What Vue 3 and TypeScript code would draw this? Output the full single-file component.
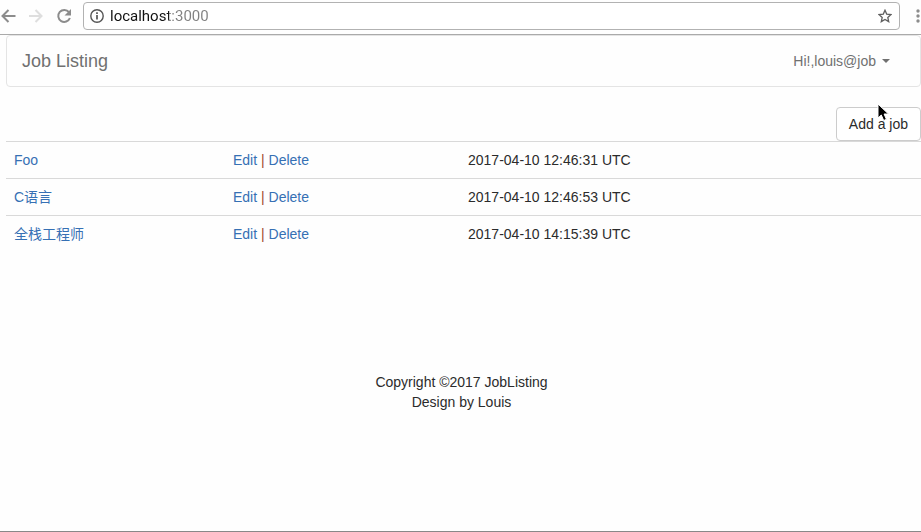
<script setup lang="ts">
import { ref } from 'vue'

interface Job {
  id: number
  title: string
  createdAt: string
}

const address = ref<string>('localhost:3000')

const jobs = ref<Job[]>([
  { id: 1, title: 'Foo', createdAt: '2017-04-10 12:46:31 UTC' },
  { id: 2, title: 'C语言', createdAt: '2017-04-10 12:46:53 UTC' },
  { id: 3, title: '全栈工程师', createdAt: '2017-04-10 14:15:39 UTC' },
])
</script>

<template>
  <div class="window">
    <header class="toolbar">
      <button class="tool" type="button" aria-label="Back">
        <svg width="17" height="16" viewBox="1 0 17 16" fill="none" stroke="#8c8c8c" stroke-width="2">
          <path d="M16.500 8H3.500M9.500 2L3.500 8l6 6" />
        </svg>
      </button>
      <button class="tool" type="button" aria-label="Forward" disabled>
        <svg width="18" height="16" viewBox="0 0 18 16" fill="none" stroke="#dedede" stroke-width="2">
          <path d="M2 8h12.500M8.500 2l6 6-6 6" />
        </svg>
      </button>
      <button class="tool" type="button" aria-label="Reload">
        <svg width="18" height="16" viewBox="0 0 18 16">
          <path d="M14 4.200A6 6 0 1 0 14.900 10" fill="none" stroke="#8c8c8c" stroke-width="2" />
          <path d="M16 1v6.500H9.500z" fill="#8c8c8c" />
        </svg>
      </button>
      <div class="omnibox">
        <svg width="14" height="14" viewBox="0 0 14 14">
          <circle cx="7" cy="7" r="6.200" fill="none" stroke="#555" stroke-width="1.400" />
          <path d="M7 6v4.500M7 3.200v1.700" stroke="#555" stroke-width="1.700" />
        </svg>
        <input v-model="address" class="url" type="text" aria-label="Address" spellcheck="false" />
        <button class="tool star" type="button" aria-label="Bookmark">
          <svg width="14" height="14" viewBox="0 0 14 14">
            <path
              d="M7 1.200l1.700 3.900 4.300.400-3.200 2.900.900 4.200L7 10.400l-3.700 2.200.900-4.200L1 5.500l4.300-.400z"
              fill="none"
              stroke="#606060"
              stroke-width="1.300"
            />
          </svg>
        </button>
      </div>
      <button class="tool menu" type="button" aria-label="Menu">
        <svg width="4" height="14" viewBox="0 0 4 14" fill="#8c8c8c">
          <circle cx="2" cy="2" r="1.700" />
          <circle cx="2" cy="7" r="1.700" />
          <circle cx="2" cy="12" r="1.700" />
        </svg>
      </button>
    </header>

    <main class="page">
      <nav class="navbar">
        <a class="brand" href="#">Job Listing</a>
        <button class="account" type="button">
          Hi!,louis@job
          <span class="caret"></span>
        </button>
      </nav>

      <div class="actions">
        <button class="add" type="button">Add a job</button>
        <svg class="pointer" width="13" height="19" viewBox="0 0 13 19">
          <path
            d="M1 1v14l3.300-3 2.400 5.500 2.700-1.200L7.100 11H11.500z"
            fill="#000"
            stroke="#fff"
            stroke-width="1"
          />
        </svg>
      </div>

      <table class="jobs">
        <tbody>
          <tr v-for="job in jobs" :key="job.id">
            <td class="title"><a href="#">{{ job.title }}</a></td>
            <td class="links"><a href="#">Edit</a> | <a href="#">Delete</a></td>
            <td>{{ job.createdAt }}</td>
          </tr>
        </tbody>
      </table>

      <footer class="footer">
        <p>Copyright ©2017 JobListing</p>
        <p>Design by Louis</p>
      </footer>
    </main>
  </div>
</template>

<style>
body {
  background: #fefefe;
}
</style>

<style scoped>
.window {
  box-sizing: border-box;
  display: flex;
  flex-direction: column;
  min-height: 100vh;
  border-bottom: 1px solid #888;
  color: #2b2b2b;
  font: 14px/20px "Liberation Sans", "Noto Sans CJK SC", sans-serif;
}

button,
input {
  margin: 0;
  padding: 0;
  border: 0;
  background: none;
  color: inherit;
  font: inherit;
}

a {
  color: #3670b4;
  text-decoration: none;
}

.toolbar {
  display: flex;
  align-items: center;
  gap: 10px;
  padding: 2px 0 4px;
  border-bottom: 1px solid #aaa;
}

.tool {
  display: flex;
  flex: none;
}

.omnibox {
  box-sizing: border-box;
  display: flex;
  flex: 1;
  align-items: center;
  gap: 6px;
  height: 28px;
  padding: 0 7px 0 6px;
  border: 1px solid #b2b2b2;
  border-radius: 4px;
  background: #fff;
}

.url {
  flex: 1;
  min-width: 0;
  background: linear-gradient(90deg, #111 59px, #808080 59px);
  background-clip: text;
  -webkit-text-fill-color: transparent;
  font-family: Roboto, sans-serif;
  font-size: 15px;
  outline: 0;
}

.menu {
  margin: 0 1px 0 6px;
}

.page {
  padding-left: 6px;
}

.navbar {
  display: flex;
  align-items: center;
  justify-content: space-between;
  height: 50px;
  padding: 0 30px 0 15px;
  border: 1px solid #e4e4e4;
  border-radius: 4px;
}

.brand {
  color: #707070;
  font-size: 18px;
}

.account {
  display: flex;
  align-items: center;
  gap: 6px;
  color: #707070;
}

.caret {
  border-top: 4px solid #707070;
  border-right: 4px solid transparent;
  border-left: 4px solid transparent;
}

.actions {
  position: relative;
  display: flex;
  justify-content: flex-end;
  margin-top: 20px;
}

.add {
  padding: 6px 12px;
  border: 1px solid #ccc;
  border-radius: 4px;
  background: #fff;
}

.pointer {
  position: absolute;
  top: -4px;
  right: 31px;
}

.jobs {
  width: 100%;
  border-collapse: collapse;
  table-layout: fixed;
}

.jobs td {
  box-sizing: border-box;
  padding: 8px;
  border-top: 1px solid #d9d9d9;
}

.jobs .title {
  width: 219px;
}

.jobs .links {
  width: 235px;
  color: #a0492c;
}

.footer {
  padding: 120px 4px 0 0;
  text-align: center;
}

.footer p {
  margin: 0;
}
</style>
